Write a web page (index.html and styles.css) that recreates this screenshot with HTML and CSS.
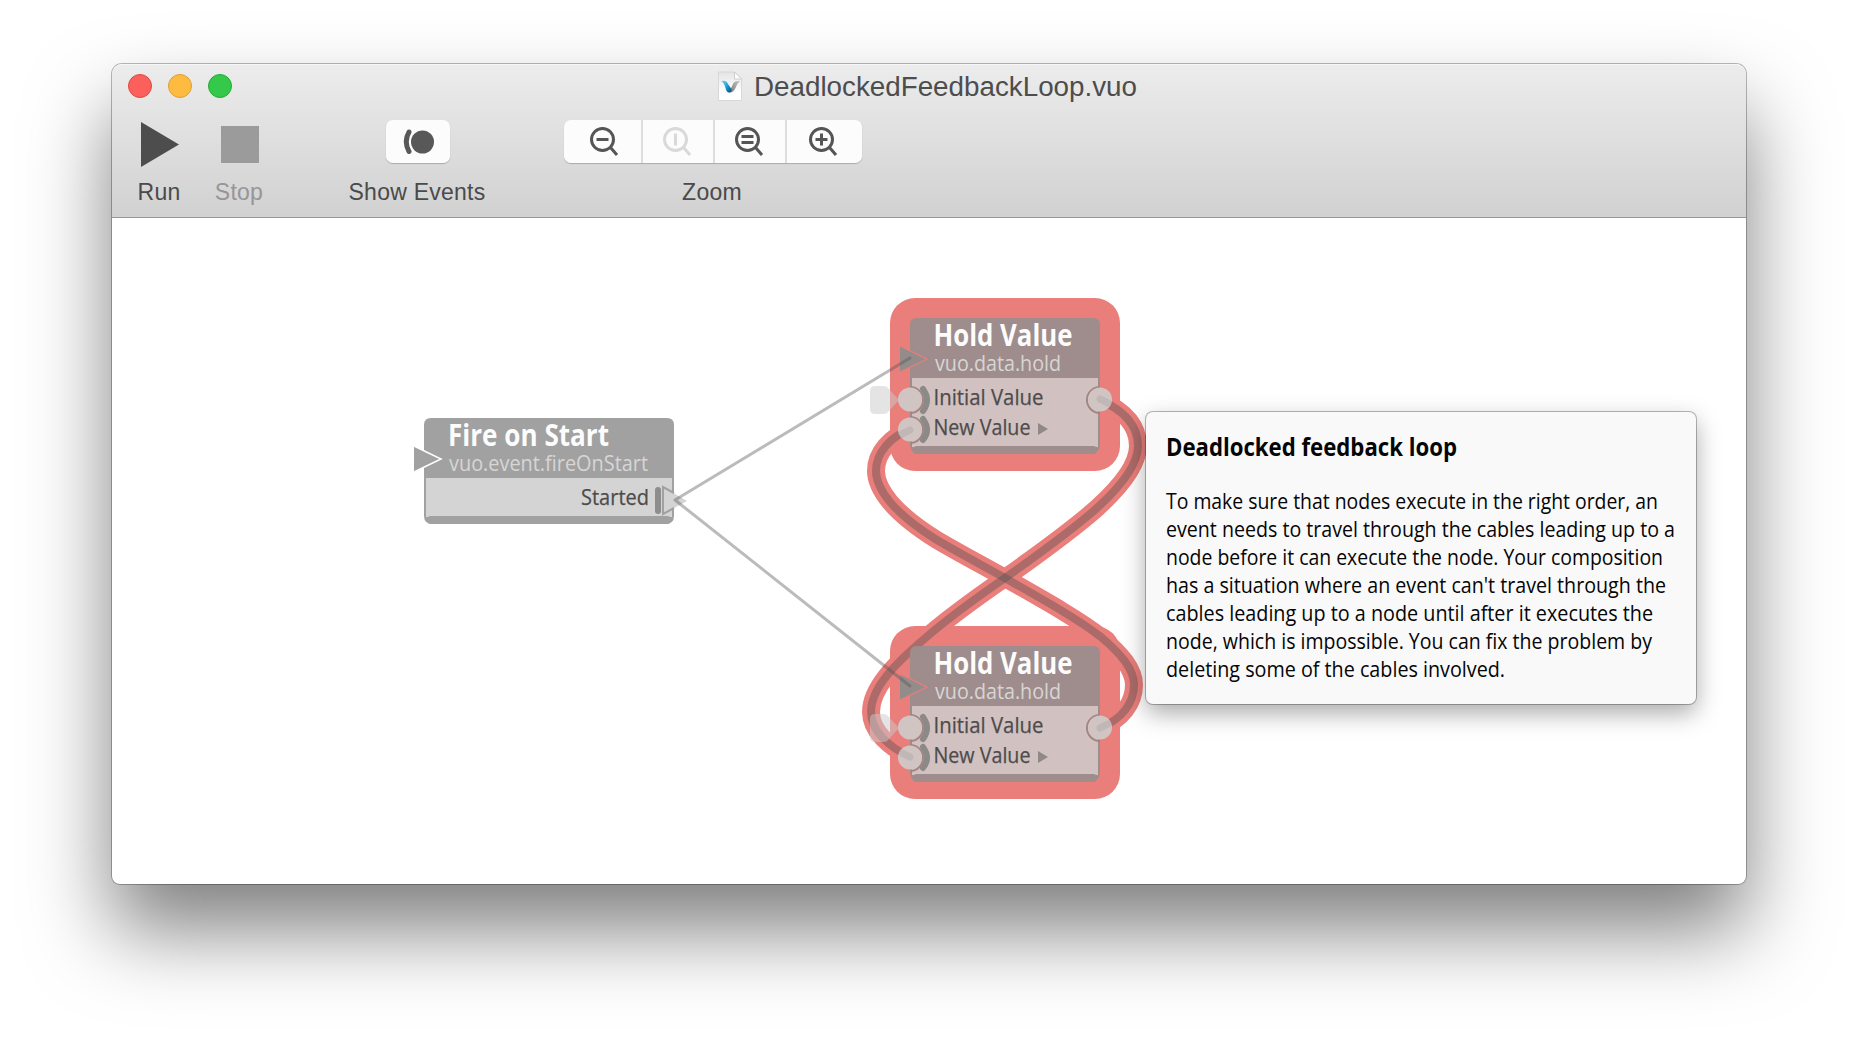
FILE: index.html
```html
<!DOCTYPE html>
<html lang="en">
<head>
<meta charset="utf-8">
<title>DeadlockedFeedbackLoop.vuo</title>
<link rel="stylesheet" href="styles.css">
</head>
<body>
<main class="window">
  <header class="chrome">
    <div class="titlebar">
      <div class="lights"><i class="light close"></i><i class="light minimize"></i><i class="light maximize"></i></div>
      <div class="title">
        <svg class="doc" width="24" height="30" viewBox="0 0 24 30">
          <defs>
            <linearGradient id="paper" x1="0" y1="0" x2="0" y2="1"><stop offset="0" stop-color="#e4e4e4"/><stop offset=".7" stop-color="#fff"/></linearGradient>
            <linearGradient id="blue" x1="0" y1="0" x2="1" y2="1"><stop offset="0" stop-color="#7ed4f5"/><stop offset=".5" stop-color="#1d9fd9"/><stop offset="1" stop-color="#064a75"/></linearGradient>
            <linearGradient id="silver" x1="0" y1="1" x2="1" y2="0"><stop offset="0" stop-color="#777"/><stop offset="1" stop-color="#c4c4c4"/></linearGradient>
          </defs>
          <path d="M.5 1H16.500L23.500 8V29.500H.500Z" fill="url(#paper)" stroke="#d8d8d8"/>
          <path d="M16.500 1V8H23.500Z" fill="#fff" stroke="#ccc"/>
          <path d="M11 21.500L15.500 12Q17 9.500 22 10Q19.500 12 18 16Q15.500 22 11 21.500Z" fill="url(#silver)"/>
          <path d="M3 10Q8.500 9 10 13L13.500 18Q14 21.500 11 21.500Q8.500 21.500 7.500 17Q6 11.500 3 10Z" fill="url(#blue)"/>
        </svg>
        <svg class="name" width="400" height="34"><text x="2" y="25" textLength="383" lengthAdjust="spacingAndGlyphs">DeadlockedFeedbackLoop.vuo</text></svg>
      </div>
    </div>
    <div class="toolbar">
      <div class="tool run"><svg width="40" height="46"><path d="M1 0V45L39 22.500Z" fill="#4d4d4d"/></svg><span>Run</span></div>
      <div class="tool stop"><svg width="38" height="46"><path d="M0 4H38V41H0Z" fill="#9b9b9b"/></svg><span>Stop</span></div>
      <div class="tool events">
        <div class="buttons"><button class="button"><svg width="32" height="28"><path d="M7 4Q1.500 13.500 7 23.500" fill="none" stroke="#585858" stroke-width="5" stroke-linecap="round"/><circle cx="20.500" cy="14" r="11.500" fill="#585858"/></svg></button></div><span>Show Events</span>
      </div>
      <div class="tool zoom">
        <div class="buttons">
          <button class="button"><svg width="30" height="32" class="glass"><circle cx="13.500" cy="13.500" r="11"/><path d="M21.500 21.500L28 29M7.500 13.500H19.500"/></svg></button>
          <button class="button off"><svg width="30" height="32" class="glass"><circle cx="13.500" cy="13.500" r="11"/><path d="M21.500 21.500L28 29M13.500 7.500V19.500"/></svg></button>
          <button class="button"><svg width="30" height="32" class="glass"><circle cx="13.500" cy="13.500" r="11"/><path d="M21.500 21.500L28 29M7.500 10.500H19.500M7.500 16.500H19.500"/></svg></button>
          <button class="button"><svg width="30" height="32" class="glass"><circle cx="13.500" cy="13.500" r="11"/><path d="M21.500 21.500L28 29M7.500 13.500H19.500M13.500 7.500V19.500"/></svg></button>
        </div><span>Zoom</span>
      </div>
    </div>
  </header>
  <section class="canvas">
    <svg class="graph" width="1634" height="666" viewBox="112 218 1634 666">
      <defs>
        <g id="hold">
          <path d="M910 325Q910 318 917 318H1093Q1100 318 1100 325V444Q1100 452 1092 454H918Q910 452 910 444Z" fill="#9e8d8c"/>
          <rect x="912" y="378" width="186" height="69" fill="#d1c1c0"/>
          <rect x="913" y="446" width="184" height="8" rx="4" fill="#9e8d8c"/>
          <path d="M900 346L926 359.500L900 372Z" fill="#948c8a"/>
          <path d="M900 346L927 359L900 372" fill="none" stroke="#e97e7b" stroke-width="1.300"/>
          <path d="M870 391Q870 386 875 386H883Q887 386 889 389L899 400L889 411Q887 414 883 414H875Q870 414 870 409Z" fill="#c9c9c9" fill-opacity=".5"/>
          <g fill="none" stroke="#8c8a89" stroke-width="6" stroke-linecap="round"><path d="M923 389Q931 400 923 411M923 419Q931 430 923 440"/></g>
          <g fill="none" stroke="#a38583" stroke-width="2"><path d="M910 387A13 13 0 0 1 910 413M910 417A13 13 0 0 1 910 443M1100 387A13 13 0 0 0 1100 413"/></g>
          <g fill="#d1c5c3"><circle cx="910" cy="399.500" r="12"/><circle cx="910" cy="429.500" r="12"/><circle cx="1100" cy="399.500" r="12"/></g>
          <path d="M1038 423V435L1048 429Z" fill="#918988"/>
          <text class="nodetitle" x="933.500" y="346" textLength="139" lengthAdjust="spacingAndGlyphs">Hold Value</text>
          <text class="nodeclass" x="935" y="371" textLength="126" lengthAdjust="spacingAndGlyphs">vuo.data.hold</text>
          <text class="port" x="933.500" y="405" textLength="110" lengthAdjust="spacingAndGlyphs">Initial Value</text>
          <text class="port" x="933.500" y="435" textLength="97" lengthAdjust="spacingAndGlyphs">New Value</text>
        </g>
        <path id="down" d="M1100 400C1123 410 1138 425 1138 446C1138 465 1119 488 1097 508C1070 532 1036 556 1005 578C976 598 948 618 923 640C895 664 871 688 871 712C871 731 889 747 910 757"/>
        <path id="up" d="M1100 728C1122 719 1134 703 1134 685C1134 669 1121 654 1101 637C1078 619 1042 599 1005 578C980 564 959 553 937 540C916 527 901 515 890 502C881 491 876 481 876 471C876 452 891 437 910 429"/>
      </defs>
      <g fill="#e97e7b"><rect x="890" y="298" width="230" height="173" rx="25"/><rect x="890" y="626" width="230" height="173" rx="25"/></g>
      <g fill="none" stroke="#e97e7b" stroke-width="18"><use href="#down"/><use href="#up"/></g>
      <g fill="none" stroke="#505050" stroke-opacity=".4" stroke-width="8"><use href="#down"/><use href="#up"/></g>
      <g>
        <path d="M424 425Q424 418 431 418H667Q674 418 674 425V516Q674 524 665 524H433Q424 524 424 516Z" fill="#a1a1a1"/>
        <rect x="426" y="478" width="246" height="39" fill="#d4d4d4"/><rect x="427" y="516" width="244" height="8" rx="4" fill="#a1a1a1"/>
        <path d="M414 446L441 459L414 472Z" fill="#a1a1a1"/><path d="M414 446L441 459L414 472" fill="none" stroke="#fff" stroke-width="1.500"/>
        <rect x="655" y="487" width="6" height="27" rx="3" fill="#8d8d8d"/>
        <path d="M663 487V514L687 501Z" fill="#d4d4d4"/><path d="M674 493L663 487V514L674 508" fill="none" stroke="#a1a1a1" stroke-width="2"/>
        <text class="nodetitle" x="448" y="446" textLength="161" lengthAdjust="spacingAndGlyphs">Fire on Start</text>
        <text class="nodeclass" x="449" y="471" textLength="199" lengthAdjust="spacingAndGlyphs">vuo.event.fireOnStart</text>
        <text class="port" x="581" y="505" textLength="68" lengthAdjust="spacingAndGlyphs">Started</text>
      </g>
      <use href="#hold"/><use href="#hold" y="328"/>
      <g fill="none" stroke="#999" stroke-opacity=".3" stroke-width="7" stroke-linecap="round"><path d="M902 434L910 430M902 753L910 757M1100 399L1108 403M1100 728L1108 724"/></g>
      <g fill="none" stroke="#555" stroke-opacity=".4" stroke-width="3" stroke-linecap="round"><path d="M675 500L910 358M675 500L910 686"/></g>
    </svg>
    <aside class="tip">
      <svg width="526" height="264">
        <text class="tiphead" x="0" y="24" textLength="291" lengthAdjust="spacingAndGlyphs">Deadlocked feedback loop</text>
        <g class="tipbody">
        <text x="0" y="77" textLength="492" lengthAdjust="spacingAndGlyphs">To make sure that nodes execute in the right order, an</text>
        <text x="0" y="105" textLength="509" lengthAdjust="spacingAndGlyphs">event needs to travel through the cables leading up to a</text>
        <text x="0" y="133" textLength="497" lengthAdjust="spacingAndGlyphs">node before it can execute the node. Your composition</text>
        <text x="0" y="161" textLength="500" lengthAdjust="spacingAndGlyphs">has a situation where an event can't travel through the</text>
        <text x="0" y="189" textLength="487" lengthAdjust="spacingAndGlyphs">cables leading up to a node until after it executes the</text>
        <text x="0" y="217" textLength="486" lengthAdjust="spacingAndGlyphs">node, which is impossible. You can fix the problem by</text>
        <text x="0" y="245" textLength="339" lengthAdjust="spacingAndGlyphs">deleting some of the cables involved.</text>
        </g>
      </svg>
    </aside>
  </section>
</main>
</body>
</html>
```
FILE: styles.css
```css
* { box-sizing: border-box; }
body { margin: 0; width: 1858px; height: 1044px; overflow: hidden; background: #fff; padding: 64px 112px 0; font-family: "Liberation Sans", sans-serif; }
.window { width: 1634px; height: 820px; border-radius: 10px 10px 8px 8px; box-shadow: 0 0 0 1px rgba(0,0,0,.27), 0 46px 82px 0 rgba(0,0,0,.5); background: #fff; }
.chrome { height: 154px; border-radius: 10px 10px 0 0; background: linear-gradient(#ececec, #d1d1d1); border-top: 1px solid #f6f6f6; border-bottom: 1px solid #979797; }
.titlebar { display: grid; grid-template-columns: 606px 1fr; height: 44px; align-items: center; }
.lights { display: flex; gap: 16px; padding: 0 0 2px 16px; }
.light { width: 24px; height: 24px; border-radius: 50%; border: 1px solid; }
.close { background: #fc605c; border-color: #df4744; }
.minimize { background: #fdbc40; border-color: #de9f34; }
.maximize { background: #34c94a; border-color: #27aa35; }
.title { display: flex; align-items: center; gap: 10px; }
.doc { margin-bottom: 3px; }
.name { margin-top: 2px; fill: #4d4d4d; font-size: 27px; overflow: visible; }
.toolbar { display: flex; align-items: flex-start; padding: 11px 0 0 1px; }
.tool { display: flex; flex-direction: column; align-items: center; color: #4a4a4a; font-size: 23px; line-height: 28px; }
.tool span { height: 28px; margin: 15px 2px 0 0; letter-spacing: .25px; white-space: nowrap; }
.run { width: 94px; padding-top: 2px; }
.tool.run span, .tool.stop span { margin-top: 10px; }
.stop { width: 66px; padding-top: 2px; color: #969696; }
.events { width: 290px; }
.zoom { width: 300px; }
.buttons { display: flex; border-radius: 7px; overflow: hidden; box-shadow: 0 1px 1px #aaa; height: 43px; }
.button { width: 72px; border: 0; padding: 0 2px 0 0; background: #fcfcfc; display: grid; place-items: center; color: #555; }
.events .button { width: 64px; padding: 0; }
.zoom .button:first-child { width: 77px; padding: 0 0 0 3px; }
.zoom .button:last-child { width: 77px; padding-right: 4px; }
.zoom .button + .button { border-left: 2px solid #dedede; }
.glass { fill: none; stroke: currentColor; stroke-width: 3; }
.off .glass { stroke: #d9d9d9; }
.canvas { position: relative; height: 666px; }
.graph { display: block; font-family: "Open Sans", sans-serif; }
.nodetitle { font-weight: 700; font-size: 30px; fill: #fcfcfc; }
.nodeclass { font-size: 22px; fill: #d8d5d4; }
.port { font-size: 22.500px; fill: #4d4b4b; stroke: #4d4b4b; stroke-width: .25px; }
.tip { position: absolute; left: 1034px; top: 194px; width: 550px; height: 292px; padding: 20px 0 0 20px; background: #f9f9f9; border-radius: 7px; box-shadow: 0 0 0 1px rgba(0,0,0,.27), 0 9px 24px rgba(0,0,0,.34); font-family: "Open Sans", sans-serif; }
.tip svg { display: block; fill: #050505; overflow: visible; }
.tiphead { font-weight: 700; font-size: 25px; }
.tipbody { font-size: 21.500px; }
```
